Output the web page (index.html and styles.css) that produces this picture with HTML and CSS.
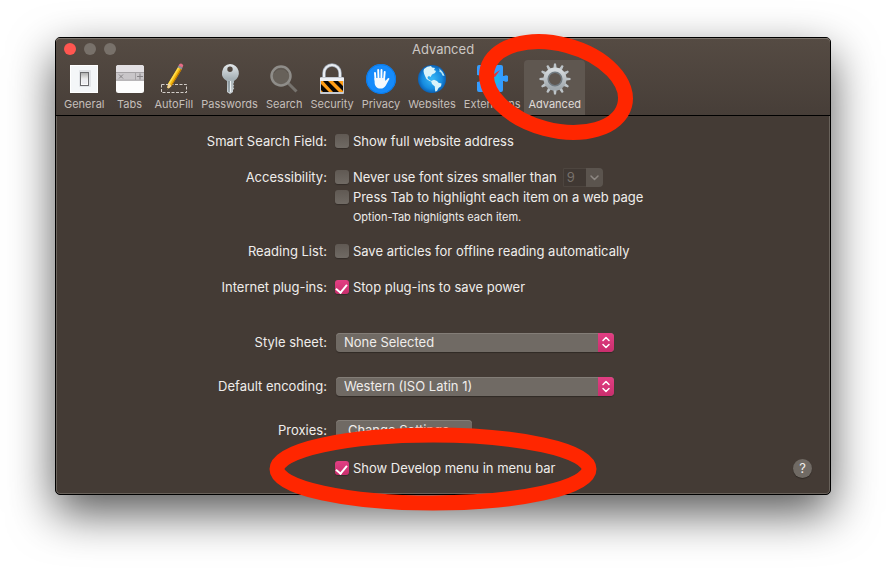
FILE: index.html
```html
<!DOCTYPE html>
<html lang="en">
<head>
<meta charset="utf-8">
<title>Advanced</title>
<link rel="stylesheet" href="styles.css">
</head>
<body>
<main class="window">
  <header class="toolbar">
    <div class="titlebar">
      <div class="lights">
        <button class="light light-close" type="button" aria-label="Close"></button>
        <button class="light" type="button" aria-label="Minimize"></button>
        <button class="light" type="button" aria-label="Zoom"></button>
      </div>
      <h1 class="title">Advanced</h1>
    </div>
    <nav class="tabs">
      <button class="tab" type="button">
        <svg class="icon" viewBox="0 0 32 32" aria-hidden="true">
          <defs><linearGradient id="switch" x1="0" y1="0" x2="0" y2="1"><stop offset="0" stop-color="#aaa"/><stop offset=".5" stop-color="#eee"/><stop offset="1" stop-color="#fff"/></linearGradient></defs>
          <rect x="2" y="2" width="28" height="28" fill="#f4f6f8"/>
          <rect x="2.500" y="2.500" width="27" height="27" fill="none" stroke="#fff"/>
          <rect x="11" y="7" width="12" height="17" rx="1" fill="#e2e4e8"/>
          <rect x="12.500" y="9.500" width="8" height="13" fill="url(#switch)" stroke="#6b6b6e"/>
          <path d="M14 16h5v5h-5z" fill="#ececf0"/>
        </svg>
        <span>General</span>
      </button>
      <button class="tab" type="button">
        <svg class="icon" viewBox="0 0 32 32" aria-hidden="true">
          <rect x="2" y="2" width="28" height="28" rx="2.500" fill="#fdfdfd"/>
          <path d="M2 9V4.500A2.500 2.500 0 0 1 4.500 2h23A2.500 2.500 0 0 1 30 4.500V9z" fill="#e3e0e3"/>
          <path d="M2 9h28v8.500H2z" fill="#c9c6c9"/>
          <path d="M2 9.500h28M2 17.200h28M21.500 9v8" stroke="#a5a2a5" fill="none"/>
          <path d="M5 11.500l4 4m0-4l-4 4M23 13.500h6M26 10.500v6" stroke="#858285" fill="none"/>
        </svg>
        <span>Tabs</span>
      </button>
      <button class="tab" type="button">
        <svg class="icon" viewBox="0 0 32 32" aria-hidden="true">
          <rect x="3.500" y="21.500" width="25" height="8" fill="none" stroke="#d2cdc8" stroke-dasharray="3 1.500"/>
          <path d="M9 27l1.200-6.500L20.500 3.500l3.600 2.200L13.500 23z" fill="#f5b90f"/>
          <path d="M9 27l1.200-6.500L20.500 3.500l1.300.8L11.500 21.500z" fill="#ffdc4e"/>
          <path d="M12.800 22.800L23 5.200l1.100.6-10.400 17.300z" fill="#b87300"/>
          <path d="M9 27l1.200-6.500 1.600.6 1.700 1.900z" fill="#efd3a0"/>
          <path d="M9 27l.4-2.300 1.400 1z" fill="#222"/>
          <path d="M20.500 2.600l1-1.700q2.500-1.300 3.800 1.500L24.200 5z" fill="#e66c86"/>
          <path d="M19.700 4.300l1-1.700 3.800 2.200-1 1.700z" fill="#8d9399"/>
        </svg>
        <span>AutoFill</span>
      </button>
      <button class="tab" type="button">
        <svg class="icon" viewBox="0 0 32 32" aria-hidden="true">
          <defs><linearGradient id="steel" x1="0" y1="0" x2="0" y2="1"><stop offset="0" stop-color="#e4e9eb"/><stop offset=".5" stop-color="#a5b0b5"/><stop offset="1" stop-color="#ccd2d5"/></linearGradient></defs>
          <path fill-rule="evenodd" d="M16 1a9 9 0 0 1 4 17v2l-1 1 1.200 1.500-1 1.500 1 1.500-1.200 1.500v2L16 31l-3-2V18A9 9 0 0 1 16 1zm0 2.500a2.700 2.700 0 1 0 0 5.400 2.700 2.700 0 0 0 0-5.400z" fill="url(#steel)"/>
          <path d="M15 18v11" stroke="#75838b"/>
          <path d="M16.500 18v11" stroke="#eef2f4"/>
        </svg>
        <span>Passwords</span>
      </button>
      <button class="tab" type="button">
        <svg class="icon" viewBox="0 0 32 32" aria-hidden="true">
          <path d="M20 20l8.500 8.500" stroke="#77736e" stroke-width="3"/>
          <circle cx="13" cy="13" r="9.500" fill="#67615a" stroke="#8f8d89" stroke-width="2.500"/>
          <path d="M6 10a8 8 0 0 1 14 0" stroke="#5a544e" fill="none"/>
        </svg>
        <span>Search</span>
      </button>
      <button class="tab" type="button">
        <svg class="icon" viewBox="0 0 32 32" aria-hidden="true">
          <defs><clipPath id="plate"><path d="M5 18h22v11H5z"/></clipPath></defs>
          <path d="M8 15V10a8 8 0 0 1 16 0v5" fill="none" stroke="#9da6b2" stroke-width="3.500"/>
          <path d="M8 15V10a8 8 0 0 1 16 0v5" fill="none" stroke="#e9edf2" stroke-width="2"/>
          <rect x="4" y="14" width="24" height="17" rx="1" fill="#c5cad2"/>
          <path d="M4 15h24v3H4z" fill="#edf0f5"/>
          <g clip-path="url(#plate)">
            <path d="M4 18h24v11H4z" fill="#ff9d16"/>
            <path d="M4 20l9 9H7l-3-3zM7 18h5l11 11h-6zM17 18h5l8 8v5z" fill="#090604"/>
          </g>
        </svg>
        <span>Security</span>
      </button>
      <button class="tab" type="button">
        <svg class="icon" viewBox="0 0 32 32" aria-hidden="true">
          <circle cx="16" cy="16" r="15" fill="#168bfb"/>
          <circle cx="16" cy="16" r="14.500" fill="none" stroke="#0879ea"/>
          <path d="M10.500 17l-.5-7M13.500 16l-.3-9M16.400 16l.1-9M19 17l.7-8" stroke="#fff" stroke-width="1.900" stroke-linecap="round" fill="none"/>
          <path d="M9.600 15h10.300l.6 3 2-2.500c1.200-1.200 2.300-.4 1.700.8l-3.400 6.200c-1.200 2-2.800 3.100-5.200 3.100-4 0-6-2.600-6-6.600z" fill="#f6f9fc"/>
        </svg>
        <span>Privacy</span>
      </button>
      <button class="tab" type="button">
        <svg class="icon" viewBox="0 0 32 32" aria-hidden="true">
          <defs><radialGradient id="ocean"><stop offset="0" stop-color="#38b8f6"/><stop offset=".7" stop-color="#168ce0"/><stop offset="1" stop-color="#0b60b4"/></radialGradient></defs>
          <circle cx="16" cy="16" r="14" fill="url(#ocean)"/>
          <path d="M8 6q3-3 7-3l1 1.500 3 .5-1 2 2 1-1 2-3 1.500-1.500 2.500-1.500-1-1.500 1 .5 2 2.500 1.500 1 1-2-.5-3-2-1.500-3L8 10.500 7.500 8z" fill="#d9f3fa"/>
          <path d="M15 18l3-1.200 3 1.200 1.500 1.700 3 .8-.5 2.800-2.500 1.700-1.500 3-1.800.5-.4-5-2.800-2.500z" fill="#d9f3fa"/>
          <path d="M22.500 5q4.500 3 6 8l-2-.5-1.300-2.800-2-1.200.5-1.500z" fill="#b8e5f3"/>
        </svg>
        <span>Websites</span>
      </button>
      <button class="tab" type="button">
        <svg class="icon" viewBox="0 0 32 32" aria-hidden="true">
          <path d="M3 2h7a3.500 3.500 0 1 0 6 0h9a2 2 0 0 1 2 2v9h1a3.200 3.200 0 1 1 0 5h-1v9a2 2 0 0 1-2 2h-9a3.500 3.500 0 1 0-6 0H3a2 2 0 0 1-2-2v-8a3.500 3.500 0 1 0 0-7V4a2 2 0 0 1 2-2z" fill="#349dff"/>
          <circle cx="16" cy="16" r="8" fill="#20b4ed"/>
          <path d="M24 7l-5 7-4-1z" fill="#e83435"/>
          <path d="M8 24l6-10 4 4z" fill="#f4f7fa"/>
        </svg>
        <span>Extensions</span>
      </button>
      <button class="tab tab-active" type="button" aria-current="page">
        <svg class="icon" viewBox="0 0 32 32" aria-hidden="true">
          <defs><linearGradient id="gear" x1="0" y1="0" x2="0" y2="1"><stop offset="0" stop-color="#d5dadd"/><stop offset="1" stop-color="#a0a8ad"/></linearGradient></defs>
          <g fill="#bdc4c8">
            <path id="teeth" d="M14.400 5l.6-4.500h2l.6 4.500zM14.400 27l.6 4.500h2l.6-4.500z"/>
            <use href="#teeth" transform="rotate(30 16 16)"/>
            <use href="#teeth" transform="rotate(60 16 16)"/>
            <use href="#teeth" transform="rotate(90 16 16)"/>
            <use href="#teeth" transform="rotate(120 16 16)"/>
            <use href="#teeth" transform="rotate(150 16 16)"/>
          </g>
          <circle cx="16" cy="16" r="9" fill="none" stroke="url(#gear)" stroke-width="5"/>
          <circle cx="16" cy="16" r="6.800" fill="none" stroke="#717a80" stroke-width="1.500"/>
        </svg>
        <span>Advanced</span>
        <svg class="mark mark-tab" viewBox="0 0 160 112" aria-hidden="true"><ellipse cx="80" cy="56" rx="71" ry="43" transform="rotate(15 80 56)"/></svg>
      </button>
    </nav>
  </header>

  <form class="settings">
    <div class="row">
      <span class="caption">Smart Search Field:</span>
      <label class="option"><input class="check" type="checkbox">Show full website address</label>
    </div>
    <div class="row">
      <span class="caption">Accessibility:</span>
      <div class="stack">
        <div class="inline">
          <label class="option"><input class="check" type="checkbox">Never use font sizes smaller than</label>
          <span class="size-picker">
            <select class="size" aria-label="Minimum font size" disabled><option>9</option></select>
            <svg class="size-arrow" viewBox="0 0 17 19" aria-hidden="true"><path d="M5 8l3.500 3.500L12 8"/></svg>
          </span>
        </div>
        <label class="option"><input class="check" type="checkbox">Press Tab to highlight each item on a web page</label>
        <p class="hint">Option-Tab highlights each item.</p>
      </div>
    </div>
    <div class="row">
      <span class="caption">Reading List:</span>
      <label class="option"><input class="check" type="checkbox">Save articles for offline reading automatically</label>
    </div>
    <div class="row">
      <span class="caption">Internet plug-ins:</span>
      <label class="option"><input class="check" type="checkbox" checked>Stop plug-ins to save power</label>
    </div>
    <div class="row row-section">
      <label class="caption" for="sheet">Style sheet:</label>
      <span class="popup">
        <select class="popup-select" id="sheet"><option>None Selected</option></select>
        <svg class="popup-arrows" viewBox="0 0 16 19" aria-hidden="true"><path d="M5 7.500l3-3 3 3M5 11.500l3 3 3-3"/></svg>
      </span>
    </div>
    <div class="row row-loose">
      <label class="caption" for="encoding">Default encoding:</label>
      <span class="popup">
        <select class="popup-select" id="encoding"><option>Western (ISO Latin 1)</option></select>
        <svg class="popup-arrows" viewBox="0 0 16 19" aria-hidden="true"><path d="M5 7.500l3-3 3 3M5 11.500l3 3 3-3"/></svg>
      </span>
    </div>
    <div class="row row-loose">
      <span class="caption">Proxies:</span>
      <button class="push" type="button">Change Settings...</button>
    </div>
    <div class="row row-last">
      <span class="caption"></span>
      <div class="footer">
        <label class="option"><input class="check" type="checkbox" checked>Show Develop menu in menu bar</label>
        <button class="help" type="button" aria-label="Help">?</button>
        <svg class="mark mark-develop" viewBox="0 0 328 84" aria-hidden="true"><ellipse cx="164" cy="42" rx="156" ry="34"/></svg>
      </div>
    </div>
  </form>
</main>
</body>
</html>
```
FILE: styles.css
```css
* {
  box-sizing: border-box;
}

body {
  margin: 0;
  padding: 37px 55px 73px;
  background: #fff;
  color: #efedeb;
  font: 400 13px/20px Inter, "Liberation Sans", sans-serif;
}

button,
select {
  margin: 0;
  padding: 0;
  border: 0;
  color: inherit;
  font: inherit;
}

.window {
  border: 1px solid #000;
  border-radius: 5px;
  background: #443b35;
  box-shadow: inset 0 0 0 1px #69625b, 0 18px 46px rgba(0, 0, 0, 0.66);
}

.toolbar {
  border-bottom: 1px solid #000;
  border-radius: 4px 4px 0 0;
  background: linear-gradient(#554b43, #473e38);
  box-shadow: inset 0 1px 0 #7d756d;
}

.titlebar {
  display: grid;
  grid-template-columns: 1fr auto 1fr;
  align-items: center;
  height: 22px;
  padding: 0 8px;
}

.lights {
  display: flex;
  gap: 8px;
}

.light {
  width: 12px;
  height: 12px;
  border-radius: 50%;
  background: #78716a;
}

.light-close {
  background: #ff5650;
}

.title {
  margin: 0;
  color: #ccc7c3;
  font-size: 13px;
  font-weight: 400;
}

.tabs {
  display: flex;
  padding: 0 4px;
}

.tab {
  position: relative;
  display: flex;
  flex-direction: column;
  align-items: center;
  min-width: 42px;
  height: 55px;
  padding: 3px 4px 0;
  background: none;
  color: #c5bfba;
  font-size: 11px;
  font-weight: 400;
  line-height: 18px;
}

.tab-active {
  border-radius: 4px 4px 0 0;
  background: #5f5750;
  color: #e0dcd9;
}

.icon {
  width: 32px;
  height: 32px;
}

.mark {
  position: absolute;
  z-index: 1;
  fill: none;
  stroke: #ff2600;
  stroke-width: 15px;
  pointer-events: none;
}

.mark-tab {
  top: -29px;
  left: -48px;
  width: 160px;
  height: 112px;
}

.mark-develop {
  top: -31px;
  left: -66px;
  width: 328px;
  height: 84px;
}

.settings {
  padding: 15px 0 16px;
}

.row {
  display: grid;
  grid-template-columns: 35% 1fr;
  column-gap: 8px;
}

.row + .row {
  margin-top: 16px;
}

.row + .row-section {
  margin-top: 35px;
}

.row + .row-loose {
  margin-top: 24px;
}

.row + .row-last {
  margin-top: 18px;
}

.caption {
  text-align: right;
}

.option {
  display: flex;
  align-items: center;
  gap: 4px;
}

.check {
  width: 14px;
  height: 14px;
  margin: 0;
  border-radius: 3px;
  appearance: none;
  background: linear-gradient(#605953, #706a64);
  box-shadow: 0 1px 1px rgba(0, 0, 0, 0.25);
}

.check:checked {
  display: grid;
  place-items: start center;
  padding-top: 2px;
  background: linear-gradient(#e23f83, #c92e6d);
}

.check:checked::before {
  width: 5px;
  height: 9px;
  border: solid #fff;
  border-width: 0 2px 2px 0;
  content: "";
  transform: rotate(40deg);
}

.inline {
  display: flex;
  align-items: center;
  gap: 6px;
}

.size-picker,
.popup {
  position: relative;
  display: flex;
}

.size {
  width: 40px;
  height: 19px;
  padding: 0 3px;
  border: 1px solid #4d453f;
  border-radius: 0 4px 4px 0;
  appearance: none;
  background: #403833;
  color: #77716b;
  line-height: 16px;
  opacity: 1;
}

.size-arrow,
.popup-arrows {
  position: absolute;
  top: 0;
  right: 0;
  height: 19px;
  fill: none;
  stroke-linecap: round;
  stroke-linejoin: round;
  pointer-events: none;
}

.size-arrow {
  width: 17px;
  border-radius: 0 4px 4px 0;
  background: #5b544e;
  stroke: #8e8883;
  stroke-width: 1.500px;
}

.hint {
  height: 18px;
  margin: 0;
  padding-left: 18px;
  font-size: 11px;
  line-height: 20px;
}

.popup {
  justify-self: start;
  width: 278px;
  margin: 1px 0 0 1px;
}

.popup-select {
  width: 100%;
  height: 19px;
  padding: 0 20px 1px 8px;
  border-radius: 4px;
  appearance: none;
  background: #706a64;
  box-shadow: inset 0 1px 0 #837d77, 0 1px 1px rgba(0, 0, 0, 0.3);
  line-height: 18px;
}

.popup-arrows {
  width: 16px;
  border-radius: 0 4px 4px 0;
  background: linear-gradient(#e23f83, #c92e6d);
  stroke: #fff;
  stroke-width: 1.500px;
}

.push {
  justify-self: start;
  height: 20px;
  margin-left: 1px;
  padding: 0 12px;
  border-radius: 4px;
  background: #706a64;
  box-shadow: inset 0 1px 0 #837d77, 0 1px 1px rgba(0, 0, 0, 0.3);
  line-height: 18px;
}

.footer {
  position: relative;
  display: flex;
  justify-content: space-between;
  align-items: center;
  padding-right: 18px;
}

.help {
  width: 19px;
  height: 19px;
  border-radius: 50%;
  background: #706a64;
  box-shadow: 0 1px 1px rgba(0, 0, 0, 0.3);
  line-height: 19px;
}
```
